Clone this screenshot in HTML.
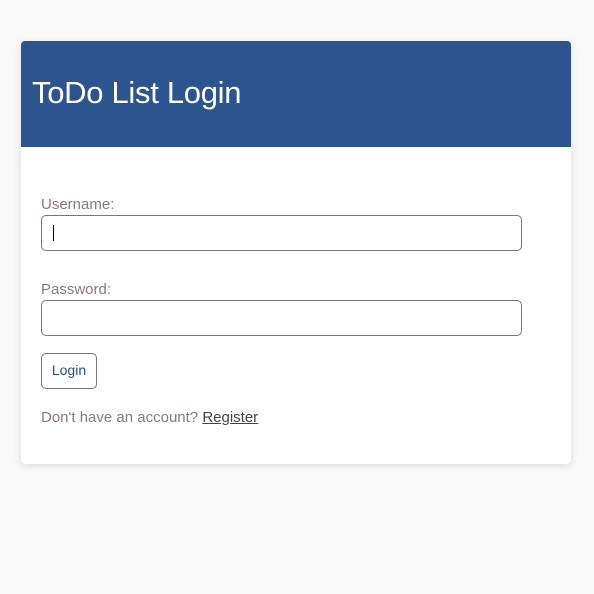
<!DOCTYPE html>
<html><head><meta charset="utf-8"><style>
body{margin:0;background:#f9f9f9;font-family:"Liberation Sans",sans-serif;}
.card{position:absolute;left:21px;top:41px;width:550px;height:423px;background:#fff;border-radius:4px;box-shadow:0 2px 8px rgba(0,0,0,0.12);overflow:hidden;}
.hdr{height:106px;background:#2c558f;color:#fff;font-size:31px;line-height:104px;padding-left:11px;letter-spacing:-0.3px;}
.lbl{position:absolute;left:20px;font-size:15px;color:#8a7a7a;}
.inp{position:absolute;left:20px;width:479px;height:34px;border:1px solid #777;border-radius:5px;}
.btn{position:absolute;left:20px;top:312px;width:54px;height:34px;border:1px solid #777;border-radius:5px;font-size:14px;color:#2c4f85;text-align:center;line-height:33px;}
.txt{position:absolute;left:20px;top:368px;font-size:15px;color:#8a7a7a;}
.txt a{color:#444;text-decoration:underline;}
</style></head><body>
<div class="card">
<div class="hdr">ToDo List Login</div>
<div class="lbl" style="top:155px">Username:</div>
<div class="inp" style="top:174px"><div style="position:absolute;left:11px;top:9px;width:1px;height:16px;background:#000"></div></div>
<div class="lbl" style="top:240px">Password:</div>
<div class="inp" style="top:259px"></div>
<div class="btn">Login</div>
<div class="txt">Don't have an account? <a>Register</a></div>
</div>
</body></html>
